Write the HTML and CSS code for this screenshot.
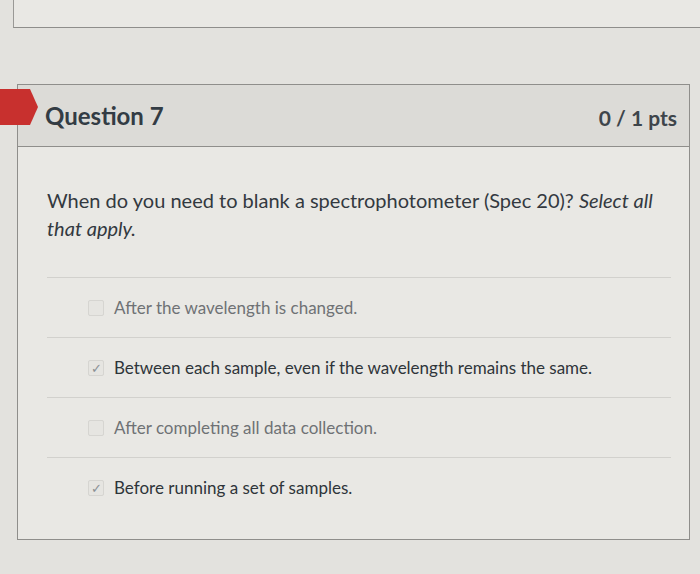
FILE: index.html
```html
<!DOCTYPE html>
<html lang="en">
<head>
    <meta charset="UTF-8">
    <meta name="viewport" content="width=device-width, initial-scale=1.0">
    <title>Question 7</title>
    <link rel="stylesheet" href="styles.css">
</head>
<body>

    <!-- Previous question (cut off) -->
    <div class="prev-question"></div>

    <div class="question">
        <div class="flag"></div>

        <div class="question-header">
            <span class="question-name">Question 7</span>
            <span class="question-points">0 / 1 pts</span>
        </div>

        <div class="question-body">
            <p class="question-text">When do you need to blank a spectrophotometer (Spec 20)? <em>Select all</em> <em>that apply.</em></p>

            <div class="answers">
                <div class="answer">
                    <span class="checkbox"></span>
                    <span class="answer-text">After the wavelength is changed.</span>
                </div>
                <div class="answer selected">
                    <span class="checkbox">&#10003;</span>
                    <span class="answer-text">Between each sample, even if the wavelength remains the same.</span>
                </div>
                <div class="answer">
                    <span class="checkbox"></span>
                    <span class="answer-text">After completing all data collection.</span>
                </div>
                <div class="answer selected">
                    <span class="checkbox">&#10003;</span>
                    <span class="answer-text">Before running a set of samples.</span>
                </div>
            </div>
        </div>
    </div>

</body>
</html>
```

FILE: styles.css
```css
/* Global Styles */
body {
    margin: 0;
    padding: 0;
    background: #e3e2de;
    font-family: Lato, 'Liberation Sans', sans-serif;
    color: #2d3b45;
    overflow: hidden;
}

.prev-question {
    height: 27px;
    margin-left: 13px;
    border-left: 1px solid #9a9996;
    border-bottom: 1px solid #8f8e8b;
    background: #e9e8e4;
}

/* Question Box */
.question {
    position: relative;
    margin: 56px 0 0 17px;
    width: 671px;
    border: 1px solid #8f8e8b;
    background: #e9e8e4;
}

.flag {
    position: absolute;
    left: -18px;
    top: 4px;
    width: 30px;
    height: 36px;
    background: #c8302e;
}

.flag::after {
    content: "";
    position: absolute;
    right: -8px;
    top: 0;
    border-top: 18px solid transparent;
    border-bottom: 18px solid transparent;
    border-left: 8px solid #c8302e;
}

.question-header {
    display: flex;
    justify-content: space-between;
    align-items: center;
    height: 61px;
    padding: 0 12px 0 27px;
    background: #dcdbd7;
    border-bottom: 1px solid #8f8e8b;
}

.question-name {
    font-size: 24px;
    font-weight: bold;
    color: #333c44;
}

.question-points {
    font-size: 21px;
    font-weight: bold;
    color: #3e454b;
    padding-top: 4px;
}

.question-body {
    padding: 39px 18px 22px 29px;
}

.question-text {
    margin: 0 0 35px;
    font-size: 20px;
    line-height: 28px;
    color: #33393f;
}

/* Answers */
.answer {
    display: flex;
    align-items: center;
    height: 59px;
    border-top: 1px solid #d2d1cd;
    padding-left: 41px;
}

.checkbox {
    display: flex;
    align-items: center;
    justify-content: center;
    width: 14px;
    height: 14px;
    margin-right: 10px;
    border: 1px solid #d6d5d1;
    border-radius: 2px;
    background: #e6e5e1;
    font-size: 13px;
    color: #8a8f94;
}

.answer-text {
    font-size: 17px;
    color: #6f7275;
}

.answer.selected .answer-text {
    color: #2f353a;
}
```
